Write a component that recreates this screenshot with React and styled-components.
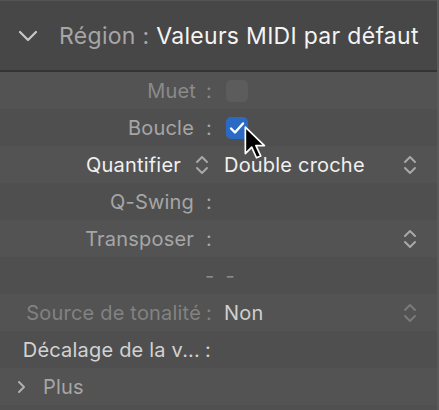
import React from "react";
import styled, { createGlobalStyle } from "styled-components";

const Global = createGlobalStyle`
  html, body { margin: 0; padding: 0; background: #4f4f4f; }
  body { font-family: Inter, "Noto Sans", "Liberation Sans", sans-serif; }
  * { box-sizing: border-box; }
`;

const Panel = styled.div`
  position: relative;
  width: 439px;
  height: 410px;
  overflow: hidden;
  background: #505050;
  border-right: 2px solid #5a5a5a;
  display: flex;
  flex-direction: column;
`;

const Header = styled.div`
  height: 72px;
  flex: none;
  background: #474747;
  border-top: 1px solid #545454;
  border-bottom: 2px solid #343434;
  display: flex;
  align-items: center;
  padding-left: 18px;
  gap: 21px;
  font-size: 23px;
  letter-spacing: 0.3px;
  white-space: nowrap;
`;

const Dim = styled.span`
  color: #a6a6a6;
`;

const Bright = styled.span`
  color: #f4f4f4;
`;

const Row = styled.div`
  height: 37px;
  flex: none;
  display: grid;
  grid-template-columns: 214px 1fr;
  column-gap: 10px;
  align-items: center;
  padding-right: 20px;
  background: ${(p) => (p.$alt ? "#4f4f4f" : "#535353")};
  font-size: 20px;
  letter-spacing: 0.2px;
`;

const Label = styled.div`
  display: flex;
  justify-content: flex-end;
  align-items: center;
  gap: ${(p) => p.$gap ?? 12}px;
  color: ${(p) => p.$color || "#a6a6a6"};
  white-space: nowrap;
  padding-right: ${(p) => p.$pr ?? 2}px;
`;

const Value = styled.div`
  display: flex;
  align-items: center;
  justify-content: space-between;
  color: ${(p) => p.$color || "#f0f0f0"};
  white-space: nowrap;
  min-width: 0;
`;

const Check = styled.div`
  width: 22px;
  height: 22px;
  margin-left: 2px;
  border-radius: 5px;
  background: ${(p) => (p.$on ? "#2b6ac4" : "#5c5c5c")};
  display: flex;
  align-items: center;
  justify-content: center;
`;

const PlusRow = styled.div`
  height: 37px;
  flex: none;
  display: flex;
  align-items: center;
  gap: 17px;
  padding-left: 17px;
  background: #535353;
  font-size: 20px;
  letter-spacing: 0.2px;
  color: #a6a6a6;
`;

const Dashes = styled.div`
  grid-column: 1 / 3;
  display: flex;
  gap: 11px;
  padding-left: 205px;
  color: #8a8a8a;
`;

const Cursor = styled.svg`
  position: absolute;
  left: 243px;
  top: 126px;
`;

const UpDown = ({ color = "#a8a8a8" }) => (
  <svg width="14" height="22" viewBox="0 0 14 22" fill="none">
    <path d="M2 8 L7 3 L12 8" stroke={color} strokeWidth="2" strokeLinecap="round" strokeLinejoin="round" />
    <path d="M2 14 L7 19 L12 14" stroke={color} strokeWidth="2" strokeLinecap="round" strokeLinejoin="round" />
  </svg>
);

export default function App() {
  return (
    <>
      <Global />
      <Panel>
        <Header>
          <svg width="20" height="12" viewBox="0 0 20 12" fill="none">
            <path d="M2 2 L10 10 L18 2" stroke="#c8c8c8" strokeWidth="2.2" strokeLinecap="round" strokeLinejoin="round" />
          </svg>
          <div>
            <Dim>Région : </Dim>
            <Bright>Valeurs MIDI par défaut</Bright>
          </div>
        </Header>

        <Row>
          <Label $color="#8a8a8a" $gap={10}>
            <span>Muet</span>
            <span>:</span>
          </Label>
          <Value>
            <Check />
          </Value>
        </Row>

        <Row $alt>
          <Label>
            <span>Boucle</span>
            <span>:</span>
          </Label>
          <Value>
            <Check $on>
              <svg width="16" height="14" viewBox="0 0 16 14" fill="none">
                <path d="M2 7.5 L6 11.5 L14 2.5" stroke="#fff" strokeWidth="2.4" strokeLinecap="round" strokeLinejoin="round" />
              </svg>
            </Check>
          </Value>
        </Row>

        <Row>
          <Label $color="#f0f0f0" $gap={14} $pr={5}>
            <span>Quantifier</span>
            <UpDown />
          </Label>
          <Value>
            <span>Double croche</span>
            <UpDown />
          </Value>
        </Row>

        <Row $alt>
          <Label>
            <span>Q-Swing</span>
            <span>:</span>
          </Label>
          <Value />
        </Row>

        <Row>
          <Label>
            <span>Transposer</span>
            <span>:</span>
          </Label>
          <Value>
            <span />
            <UpDown />
          </Value>
        </Row>

        <Row $alt>
          <Dashes>
            <span>-</span>
            <span>-</span>
          </Dashes>
        </Row>

        <Row>
          <Label $color="#828282" $gap={5}>
            <span>Source de tonalité</span>
            <span>:</span>
          </Label>
          <Value $color="#cfcfcf">
            <span>Non</span>
            <UpDown color="#7a7a7a" />
          </Value>
        </Row>

        <Row $alt>
          <Label $color="#d2d2d2" $gap={5} $pr={3}>
            <span>Décalage de la v...</span>
            <span>:</span>
          </Label>
          <Value />
        </Row>

        <PlusRow>
          <svg width="9" height="14" viewBox="0 0 9 14" fill="none">
            <path d="M2 2 L7 7 L2 12" stroke="#b0b0b0" strokeWidth="2" strokeLinecap="round" strokeLinejoin="round" />
          </svg>
          <span>Plus</span>
        </PlusRow>

        <Cursor width="28" height="36" viewBox="0 0 26 34">
          <path d="M2 1 L2 26 L8 20 L12.5 30 L16.5 28.3 L12 18.5 L20 18.5 Z" fill="#000" stroke="#fff" strokeWidth="1.6" strokeLinejoin="round" />
        </Cursor>
      </Panel>
    </>
  );
}
